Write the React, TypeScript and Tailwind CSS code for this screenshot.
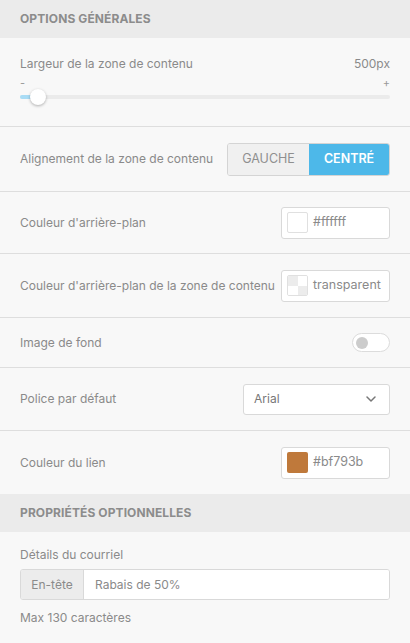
import { ChevronDown } from "lucide-react";

const font = { fontFamily: "Inter, 'Noto Sans', sans-serif" };

const SectionHeader = ({ title }: { title: string }) => (
  <div className="h-[38px] bg-[#ebebeb] px-5 flex items-center">
    <h2 className="text-[12px] font-bold text-[#8c8c8c] tracking-[0.1px]">{title}</h2>
  </div>
);

const Row = ({ label, children, h }: { label: string; children: React.ReactNode; h: string }) => (
  <div className={`${h} px-5 flex items-center justify-between border-b border-[#dedede]`}>
    <span className="text-[12px] text-[#8a8a8a] whitespace-nowrap">{label}</span>
    {children}
  </div>
);

const ColorInput = ({ swatch, value }: { swatch: React.ReactNode; value: string }) => (
  <div className="w-[109px] h-[32px] shrink-0 bg-white border border-[#d9d9d9] rounded-[3px] flex items-center pl-[5px] gap-[5px]">
    {swatch}
    <span className="text-[12.5px] text-[#8a8a8a]">{value}</span>
  </div>
);

const App = () => {
  return (
    <div className="w-[410px] h-[643px] bg-[#f8f8f8] overflow-hidden" style={font}>
      <SectionHeader title="OPTIONS GÉNÉRALES" />

      <div className="h-[89px] px-5 pt-[17px] border-b border-[#dedede]">
        <div className="flex justify-between text-[12px] text-[#8a8a8a]">
          <span>Largeur de la zone de contenu</span>
          <span>500px</span>
        </div>
        <div className="flex justify-between text-[11px] text-[#9a9a9a] mt-[5px] leading-none">
          <span>-</span>
          <span>+</span>
        </div>
        <div className="relative mt-[6px] h-[4px] bg-[#ebebeb] rounded-full">
          <div className="absolute left-0 top-0 h-[4px] w-[14px] bg-[#a9dcf5] rounded-full" />
          <div className="absolute left-[10px] top-[-6px] w-[16px] h-[16px] bg-white rounded-full shadow-[0_1px_3px_rgba(0,0,0,0.3)]" />
        </div>
      </div>

      <Row label="Alignement de la zone de contenu" h="h-[65px]">
        <div className="flex h-[33px] border border-[#d4d4d4] rounded-[3px] overflow-hidden">
          <div className="w-[81px] bg-[#f0f0f0] flex items-center justify-center text-[12.5px] text-[#8f8f8f]">GAUCHE</div>
          <div className="w-[80px] bg-[#4db8e9] flex items-center justify-center text-[12.5px] font-semibold text-white">CENTRÉ</div>
        </div>
      </Row>

      <Row label="Couleur d'arrière-plan" h="h-[62px]">
        <ColorInput
          value="#ffffff"
          swatch={<div className="w-[21px] h-[21px] bg-white border border-[#e0e0e0] rounded-[2px]" />}
        />
      </Row>

      <Row label="Couleur d'arrière-plan de la zone de contenu" h="h-[64px]">
        <ColorInput
          value="transparent"
          swatch={
            <div className="w-[21px] h-[21px] shrink-0 border border-[#e0e0e0] rounded-[2px] grid grid-cols-2 grid-rows-2 overflow-hidden">
              <div className="bg-[#ececec]" />
              <div className="bg-white" />
              <div className="bg-white" />
              <div className="bg-[#ececec]" />
            </div>
          }
        />
      </Row>

      <Row label="Image de fond" h="h-[50px]">
        <div className="w-[38px] h-[19px] bg-white border border-[#dcdcdc] rounded-full flex items-center pl-[3px]">
          <div className="w-[12px] h-[12px] rounded-full bg-[#cccccc]" />
        </div>
      </Row>

      <Row label="Police par défaut" h="h-[63px]">
        <div className="w-[147px] h-[31px] bg-white border border-[#d9d9d9] rounded-[3px] flex items-center justify-between pl-[10px] pr-[10px]">
          <span className="text-[12px] text-[#777777]">Arial</span>
          <ChevronDown size={16} strokeWidth={2.25} className="text-[#777777]" />
        </div>
      </Row>

      <div className="h-[63px] px-5 flex items-center justify-between">
        <span className="text-[12px] text-[#8a8a8a]">Couleur du lien</span>
        <ColorInput
          value="#bf793b"
          swatch={<div className="w-[21px] h-[21px] bg-[#bf793b] rounded-[2px]" />}
        />
      </div>

      <SectionHeader title="PROPRIÉTÉS OPTIONNELLES" />

      <div className="px-5 pt-[17px]">
        <div className="text-[12px] text-[#8a8a8a] leading-none">Détails du courriel</div>
        <div className="mt-[8px] flex h-[31px] border border-[#d9d9d9] rounded-[3px] overflow-hidden">
          <div className="w-[63px] bg-[#ececec] border-r border-[#d9d9d9] flex items-center justify-center text-[12px] text-[#8a8a8a]">En-tête</div>
          <div className="flex-1 bg-white flex items-center pl-[11px] text-[12px] text-[#8a8a8a]">Rabais de 50%</div>
        </div>
        <div className="mt-[12px] text-[12px] text-[#8a8a8a] leading-none">Max 130 caractères</div>
      </div>
    </div>
  );
};

export default App;
